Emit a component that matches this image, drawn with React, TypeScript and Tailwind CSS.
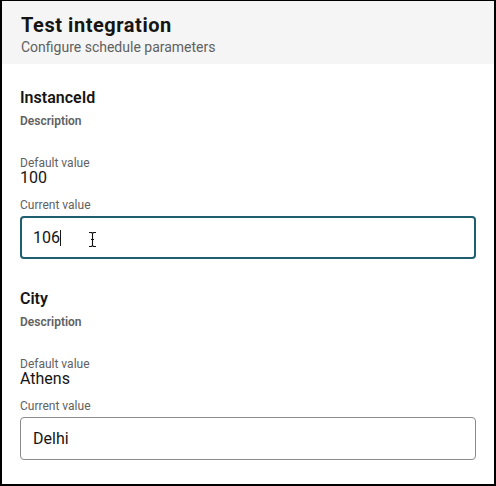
import React from 'react'

interface Param {
  name: string
  defaultValue: string
  currentValue: string
  focused?: boolean
}

const params: Param[] = [
  { name: 'InstanceId', defaultValue: '100', currentValue: '106', focused: true },
  { name: 'City', defaultValue: 'Athens', currentValue: 'Delhi' },
]

// I-beam mouse pointer drawn over the focused field
const IBeam = () => (
  <svg className="absolute left-[66px] top-[13px]" width="9" height="17" viewBox="0 0 9 17">
    <path d="M1 1.5h2.5L4.5 2.5L5.5 1.5H8M4.5 2.5V14.5M1 15.5h2.5L4.5 14.5L5.5 15.5H8" fill="none" stroke="#fff" strokeWidth="2.6" />
    <path d="M1 1.5h2.5L4.5 2.5L5.5 1.5H8M4.5 2.5V14.5M1 15.5h2.5L4.5 14.5L5.5 15.5H8" fill="none" stroke="#111" strokeWidth="1.1" />
    <path d="M3 8.5h3" stroke="#111" strokeWidth="1" />
  </svg>
)

const ParamField: React.FC<{ param: Param; first: boolean }> = ({ param, first }) => (
  <div className={first ? 'pt-[22px]' : 'pt-[28px]'}>
    <div className="text-base leading-[23px] font-semibold text-[#161513]">{param.name}</div>
    <div className="mt-[4px] text-xs leading-4 font-semibold text-[#616161]">Description</div>
    <div className="mt-[28px] text-xs leading-3 text-[#616161]">Default value</div>
    <div className="mt-[3px] text-base leading-[11px] text-[#161513]">{param.defaultValue}</div>
    <div className="mt-[14px] text-xs leading-4 text-[#616161]">Current value</div>
    <div
      className={
        param.focused
          ? 'relative mt-[3px] h-[43px] flex items-center rounded-[4px] border-2 border-[#1f5e6e] px-[11px] text-base text-[#161513] bg-white'
          : 'relative mt-[3px] h-[43px] flex items-center rounded-[4px] border border-[#8a8a8a] px-3 text-base text-[#161513] bg-white'
      }
    >
      <span>{param.currentValue}</span>
      {param.focused && (
        <>
          <span className="inline-block w-px h-[16px] bg-[#161513]" />
          <IBeam />
        </>
      )}
    </div>
  </div>
)

export default function App() {
  return (
    <div
      className="w-[496px] h-[486px] overflow-hidden bg-white border-black border-t border-x-2 border-b-2"
      style={{ fontFamily: 'Roboto, "Liberation Sans", sans-serif' }}
    >
      <div className="h-[63px] bg-[#f5f5f5] px-[19px] pt-[12px]">
        <h1 className="text-[20px] leading-[25px] font-bold tracking-[0.55px] text-[#161513]">Test integration</h1>
        <p className="text-sm leading-[18px] text-[#616161]">Configure schedule parameters</p>
      </div>
      <div className="px-[18px]">
        {params.map((p, i) => (
          <ParamField key={p.name} param={p} first={i === 0} />
        ))}
      </div>
    </div>
  )
}
